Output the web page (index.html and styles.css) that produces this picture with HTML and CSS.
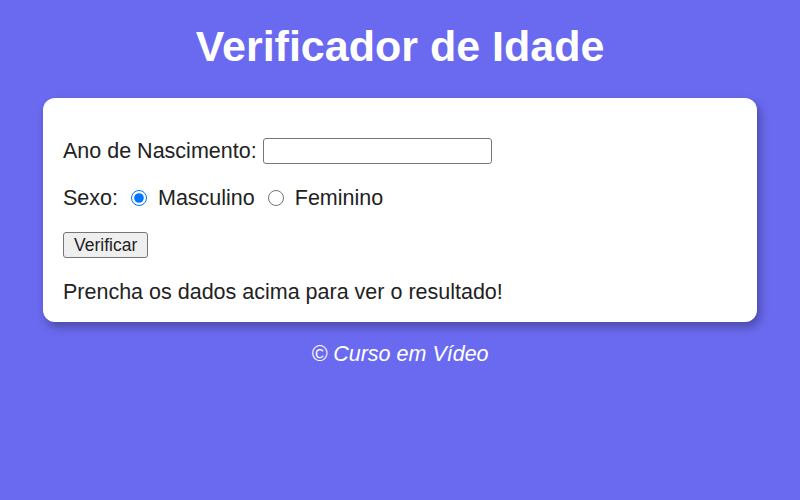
FILE: index.html
```html
<!DOCTYPE html>
<html lang="pt-BR">
<head>
  <meta charset="UTF-8">
  <title>Verificador de Idade</title>
  <link rel="stylesheet" href="styles.css">
</head>
<body>
  <header>
    <h1>Verificador de Idade</h1>
  </header>
  <section class="card">
    <p class="row">
      <label for="txtano">Ano de Nascimento:</label>
      <input type="number" id="txtano" class="field">
    </p>
    <p class="row">
      Sexo:
      <input type="radio" name="sex" id="mas" checked>
      <label for="mas">Masculino</label>
      <input type="radio" name="sex" id="fem">
      <label for="fem">Feminino</label>
    </p>
    <p class="row">
      <input type="button" value="Verificar" class="btn">
    </p>
    <div class="result">Prencha os dados acima para ver o resultado!</div>
  </section>
  <footer>
    <p>&copy; Curso em Vídeo</p>
  </footer>
</body>
</html>
```

FILE: styles.css
```css
body {
  background: #6a6af0;
  font-family: 'Liberation Sans', Arial, sans-serif;
  margin: 0;
  padding: 0;
  color: #222;
}
header {
  color: #fff;
  text-align: center;
  padding-top: 22px;
}
header h1 {
  margin: 0;
  font-size: 43px;
  line-height: 48px;
}
.card {
  background: #fff;
  width: 674px;
  margin: 28px auto 0 auto;
  padding: 40px 20px 17px 20px;
  border-radius: 12px;
  box-shadow: 3px 5px 10px rgba(0,0,0,0.3);
  font-size: 21.5px;
}
.row {
  margin: 0 0 21px 0;
  display: flex;
  align-items: center;
  gap: 6px;
  line-height: 26px;
  height: 26px;
}
.field {
  width: 227px;
  height: 24px;
  box-sizing: content-box;
  padding: 0;
  border: 1px solid #767676;
  border-radius: 3px;
  font-size: 17px;
}
.row input[type=radio] {
  width: 16px;
  height: 16px;
  margin: 0 5px 0 7px;
}
.btn {
  font-family: inherit;
  font-size: 17.5px;
  height: 26px;
  padding: 0 10px;
  background: #efefef;
  border: 1px solid #767676;
  border-radius: 3px;
  color: #222;
}
.result {
  line-height: 26px;
}
footer {
  text-align: center;
  color: #fff;
  font-style: italic;
  font-size: 21.5px;
}
footer p {
  margin: 20px 0;
}
```
